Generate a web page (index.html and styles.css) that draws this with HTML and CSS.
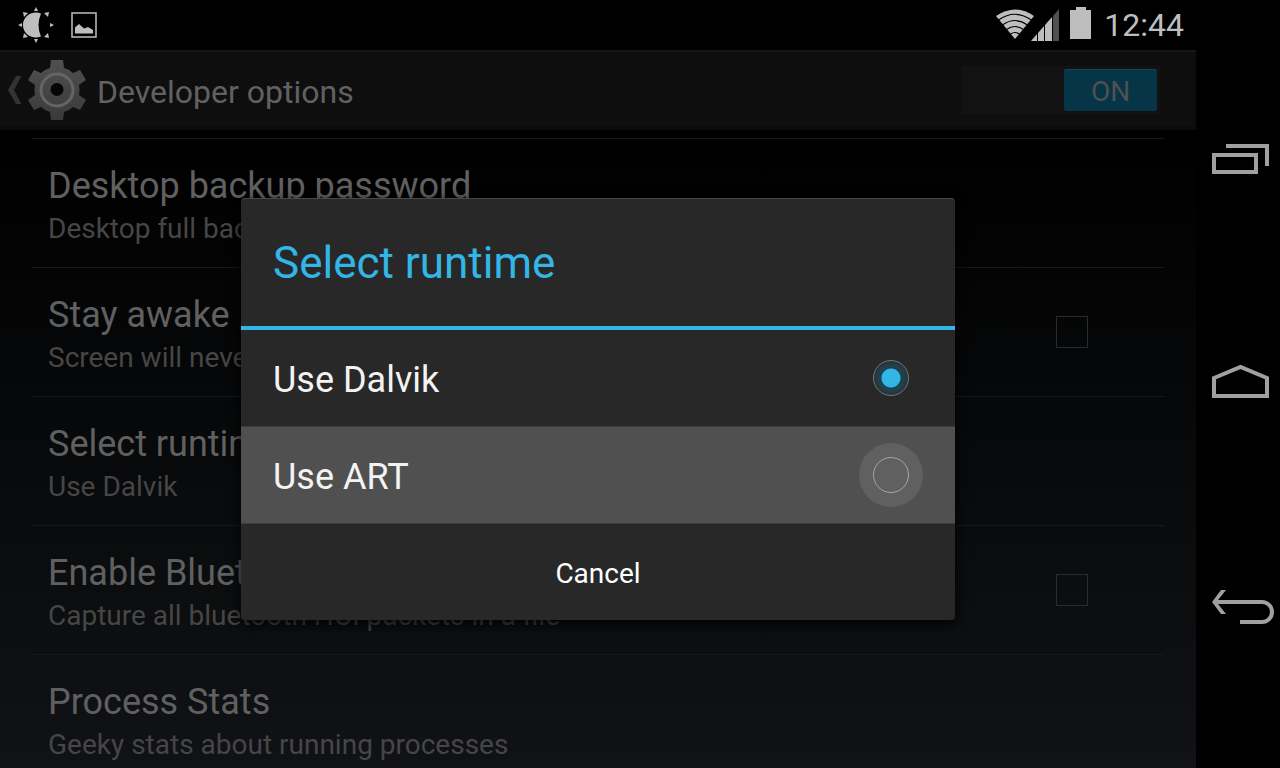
FILE: index.html
```html
<!DOCTYPE html>
<html lang="en">
<head>
    <meta charset="UTF-8">
    <meta name="viewport" content="width=device-width, initial-scale=1.0">
    <title>Developer options</title>
    <link rel="stylesheet" href="styles.css">
</head>
<body>
    <div class="screen">
        <div class="status-bar">
            <svg class="icon-night" width="36" height="36" viewBox="0 0 36 36" fill="currentColor">
                <path d="M23 6.500A13 12.500 0 1 0 23 29.500Q18 18 23 6.500Z"/>
                <path d="M18 0l2 4h-4zM18 36l2-4h-4zM0 18l4-2v4zM36 18l-4-2v4zM5 5l5 1-4 4zM31 5l-5 1 4 4zM5 31l5-1-4-4zM31 31l-5-1 4-4z"/>
            </svg>
            <svg class="icon-picture" width="26" height="26" viewBox="0 0 26 26" fill="currentColor">
                <path d="M1 1h24v24H1z" fill="none" stroke="currentColor" stroke-width="1.500"/>
                <path d="M4 21.500v-6l4-3.500 5 4.500 4-1.500 5 3v3.500z"/>
            </svg>
            <div class="status-right">
                <svg width="66" height="36" viewBox="0 0 66 36" fill="currentColor">
                    <path d="M20 32L1 9Q20-4 39 9z"/>
                    <path d="M3.500 13Q20 1.500 36.500 13M7.500 18Q20 9 32.500 18M11.500 22.500Q20 16.500 28.500 22.500M15.500 27Q20 24 24.500 27" fill="none" stroke="#000" stroke-width="1.200"/>
                    <path d="M36 34l6-7v7zM43 34v-8l6-7v15zM50 34V18l7-8v24z"/>
                    <path d="M58 34V9l6-7v32z" fill="#505050"/>
                </svg>
                <svg class="icon-battery" width="22" height="32" viewBox="0 0 22 32" fill="currentColor">
                    <path d="M6 0h10v3h5v29H0V3h6z"/>
                </svg>
                <span class="clock">12:44</span>
            </div>
        </div>

        <div class="content">
            <div class="action-bar">
                <a class="up" href="#">
                    <svg width="14" height="28" viewBox="0 0 14 28" fill="#333"><path d="M8 0h5.500L6 14l7.500 14H8L0 14z"/></svg>
                    <svg class="icon-gear" width="58" height="60" viewBox="0 0 58 60">
                        <defs>
                            <linearGradient id="metal" x1="0" y1="0" x2="0" y2="1">
                                <stop offset="0" stop-color="#505050"/>
                                <stop offset="1" stop-color="#3a3a3a"/>
                            </linearGradient>
                        </defs>
                        <path fill="url(#metal)" d="M23 0h12l1 8q5 1 9 5l7-3 6 10-7 5q1 5 0 10l7 5-6 10-7-3q-4 4-9 5l-1 8H23l-1-8q-5-1-9-5l-7 3-6-10 7-5q-1-5 0-10l-7-5 6-10 7 3q4-4 9-5z"/>
                        <circle cx="29" cy="30" r="16" fill="none" stroke="#656565" stroke-width="3"/>
                        <ellipse cx="29" cy="29.500" rx="6.500" ry="6.500" fill="#050505"/>
                    </svg>
                    <span class="action-title">Developer options</span>
                </a>
                <label class="switch">
                    <input type="checkbox" role="switch" aria-label="Developer options" checked>
                    <span class="thumb">ON</span>
                </label>
            </div>

            <ul class="settings">
                <li class="setting">
                    <div class="setting-title">Desktop backup password</div>
                    <div class="setting-summary">Desktop full backups aren't currently protected</div>
                </li>
                <li class="setting with-box">
                    <label for="awake">
                        <span class="setting-title">Stay awake</span>
                        <span class="setting-summary">Screen will never sleep while charging</span>
                    </label>
                    <input type="checkbox" class="check" id="awake">
                </li>
                <li class="setting">
                    <div class="setting-title">Select runtime</div>
                    <div class="setting-summary">Use Dalvik</div>
                </li>
                <li class="setting with-box">
                    <label for="snoop">
                        <span class="setting-title">Enable Bluetooth HCI snoop log</span>
                        <span class="setting-summary">Capture all bluetooth HCI packets in a file</span>
                    </label>
                    <input type="checkbox" class="check" id="snoop">
                </li>
                <li class="setting">
                    <div class="setting-title">Process Stats</div>
                    <div class="setting-summary">Geeky stats about running processes</div>
                </li>
            </ul>

            <div class="overlay">
                <div class="dialog" role="dialog" aria-labelledby="dialogTitle">
                    <h1 class="dialog-title" id="dialogTitle">Select runtime</h1>
                    <label class="option">
                        <span>Use Dalvik</span>
                        <input type="radio" name="runtime" class="radio" checked>
                    </label>
                    <label class="option pressed">
                        <span>Use ART</span>
                        <input type="radio" name="runtime" class="radio">
                    </label>
                    <button class="cancel" type="button">Cancel</button>
                </div>
            </div>
        </div>
    </div>

    <nav class="nav-bar">
        <button type="button" aria-label="Recent apps">
            <svg width="64" height="40" viewBox="0 0 64 40"><path d="M4 16h42v17H4zM16 7h41v20"/></svg>
        </button>
        <button type="button" aria-label="Home">
            <svg width="64" height="40" viewBox="0 0 64 40"><path d="M4 34V16L30.500 5 57 16v18z"/></svg>
        </button>
        <button type="button" aria-label="Back">
            <svg width="64" height="40" viewBox="0 0 64 40"><path d="M4 16h48a10 10 0 0 1 0 20H30"/><path class="arrow" d="M11 4h5L6.500 16 16 28h-5L2 16z"/></svg>
        </button>
    </nav>
</body>
</html>
```

FILE: styles.css
```css
* {
    box-sizing: border-box;
}
body {
    display: flex;
    height: 100vh;
    margin: 0;
    overflow: hidden;
    background-color: #000;
    color: #fff;
    font-family: Roboto, sans-serif;
}
button {
    font-family: inherit;
    background: none;
    border: none;
    padding: 0;
    cursor: pointer;
}
svg {
    display: block;
    flex: none;
}
.screen {
    flex: 1;
    min-width: 0;
    display: flex;
    flex-direction: column;
}

/* Status bar */
.status-bar {
    display: flex;
    align-items: center;
    flex: none;
    height: 50px;
    padding: 0 12px 0 18px;
    color: #bebebe;
}
.icon-picture {
    margin-left: 17px;
}
.status-right {
    display: flex;
    align-items: center;
    margin-left: auto;
}
.icon-battery {
    margin: 0 12px 4px 9px;
}
.clock {
    font-size: 32px;
    line-height: 40px;
}

/* Settings page */
.content {
    position: relative;
    flex: 1;
    min-height: 0;
    overflow: hidden;
    background: linear-gradient(#000 80px, #101215);
}
.action-bar {
    display: flex;
    align-items: center;
    justify-content: space-between;
    height: 80px;
    padding: 2px 36px 0 8px;
    background-color: #0e0e0e;
    border-top: 2px solid #161616;
    border-bottom: 4px solid #0b0b0b;
}
.up {
    display: flex;
    align-items: center;
    text-decoration: none;
}
.icon-gear {
    margin: 0 11px 0 6px;
}
.action-title {
    padding-top: 3px;
    color: #616161;
    font-size: 32px;
    line-height: 40px;
}
.switch {
    position: relative;
    display: flex;
    justify-content: flex-end;
    width: 198px;
    height: 48px;
    padding: 3px;
    background-color: #121212;
}
.switch input {
    position: absolute;
    inset: 0;
    width: 100%;
    height: 100%;
    margin: 0;
    opacity: 0;
}
.thumb {
    width: 93px;
    background-color: #063547;
    border-top: 1px solid #174354;
    border-radius: 2px;
    color: #505050;
    font-size: 28px;
    line-height: 43px;
    text-align: center;
}
.settings {
    list-style: none;
    margin: 8px 32px 0;
    padding: 0;
}
.setting {
    height: 129px;
    padding: 23px 16px 0;
    border-top: 1px solid #17181a;
    white-space: nowrap;
}
.with-box {
    display: flex;
    justify-content: space-between;
    padding-right: 76px;
}
.setting-title {
    display: block;
    color: #606060;
    font-size: 36px;
    line-height: 48px;
}
.setting-summary {
    display: block;
    color: #464646;
    font-size: 28px;
    line-height: 38px;
}
.check {
    appearance: none;
    width: 32px;
    height: 32px;
    margin: 25px 0 0;
    border: 1px solid #2a2b2c;
}

/* Dialog */
.overlay {
    position: absolute;
    inset: 0;
    display: flex;
    align-items: center;
    justify-content: center;
}
.dialog {
    width: 100%;
    max-width: 714px;
    background-color: #282828;
    border-top: 1px solid #484848;
    border-radius: 4px;
    box-shadow: 0 4px 12px 2px rgba(0, 0, 0, 0.7);
}
.dialog-title {
    margin: 0;
    padding: 36px 32px 35px;
    border-bottom: 4px solid #33b5e5;
    color: #33b5e5;
    font-size: 44px;
    font-weight: 400;
    line-height: 56px;
}
.option {
    display: flex;
    align-items: center;
    justify-content: space-between;
    height: 97px;
    padding: 0 32px;
    border-bottom: 1px solid #3c3c3c;
    color: #f3f3f3;
    font-size: 36px;
}
.option span {
    padding-top: 4px;
}
.pressed {
    background-color: #505050;
}
.radio {
    appearance: none;
    display: grid;
    place-items: center;
    width: 64px;
    height: 64px;
    margin: 0;
    border-radius: 50%;
}
.radio::before {
    content: "";
    box-sizing: border-box;
    width: 36px;
    height: 36px;
    border: 1px solid #a8a8a8;
    border-radius: 50%;
}
.radio:checked::before {
    border: 1px solid #70777a;
    background: radial-gradient(circle, #33b5e5 9px, #164251 10px, #22424e 12px, #29343a 16px);
}
.pressed .radio {
    background-color: #606060;
}
.cancel {
    display: block;
    width: 100%;
    height: 96px;
    padding-top: 2px;
    color: #fff;
    font-size: 28px;
}

/* Navigation buttons */
.nav-bar {
    display: flex;
    flex-direction: column;
    align-items: center;
    justify-content: space-around;
    flex: none;
    width: 84px;
    padding: 47px 0 50px 8px;
}
.nav-bar path {
    fill: none;
    stroke: #a0a0a0;
    stroke-width: 4;
}
.nav-bar .arrow {
    fill: #a0a0a0;
    stroke: none;
}
```
